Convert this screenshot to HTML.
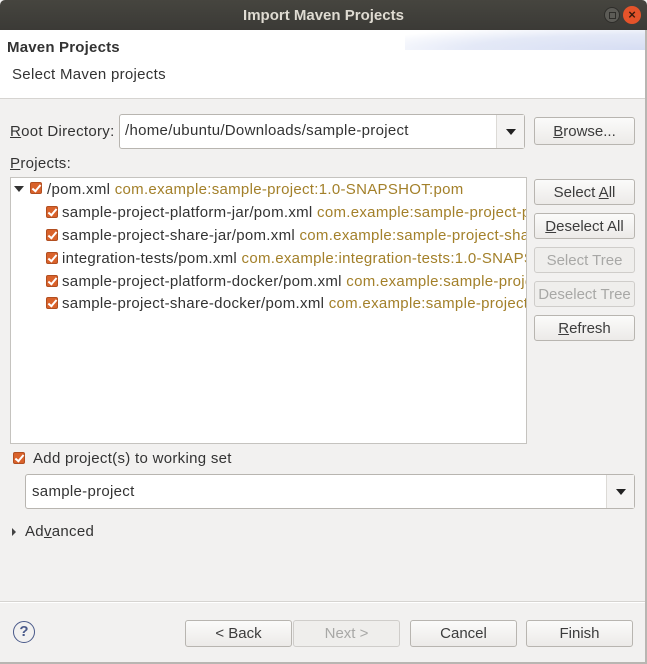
<!DOCTYPE html>
<html><head><style>
*{box-sizing:border-box;margin:0;padding:0}
body{width:647px;height:664px;overflow:hidden;background:#f2f1f0;font-family:"Liberation Sans",sans-serif;font-size:15px;letter-spacing:0.3px;color:#3c3c3c;position:relative}
.abs{position:absolute;white-space:nowrap}
.btn{position:absolute;border:1px solid #b8b5b0;border-radius:3px;background:linear-gradient(#fbfbfa,#eceae8);text-align:center;font-size:15px;color:#3c3c3c;line-height:26px;letter-spacing:0}
.dis{color:#a8a8a6;background:#efeeec;border-color:#cfcdca}
.cb{position:absolute;width:12px;height:12px;border-radius:2px;background:#d9622b;border:1px solid #b14e20}
.cb:after{content:"";position:absolute;left:3px;top:0px;width:3px;height:7px;border:solid #fff;border-width:0 2px 2px 0;transform:rotate(40deg)}
.row{position:absolute;white-space:nowrap;font-size:15px;color:#333}
.row span{color:#a3802a}
u{text-decoration:underline}
</style></head><body>
<div class="abs" style="left:0;top:0;width:647px;height:30px;background:linear-gradient(#46453f,#3b3a36);border-radius:5px 5px 0 0"></div>
<div class="abs" style="left:0;top:7px;width:647px;text-align:center;color:#dfdbd2;font-weight:bold;font-size:15px;letter-spacing:0">Import Maven Projects</div>
<div class="abs" style="left:604px;top:7px;width:16px;height:16px;border-radius:50%;background:#5c5b56;border:1px solid #2e2d2a"></div>
<div class="abs" style="left:609px;top:12px;width:7px;height:7px;border:1px solid #2e2d2a"></div>
<div class="abs" style="left:623px;top:6px;width:18px;height:18px;border-radius:50%;background:#e5532a;color:#3a1a0c;font-size:13px;text-align:center;line-height:18px;font-weight:bold;letter-spacing:0">×</div>
<div class="abs" style="left:0;top:30px;width:647px;height:69px;background:#fff;border-bottom:1px solid #d6d4d1"></div>
<div class="abs" style="left:405px;top:30px;width:242px;height:20px;background:radial-gradient(ellipse 300px 26px at 100% 100%,#d6ddf3 0%,#e4e9f7 60%,rgba(255,255,255,0) 100%)"></div>
<div class="abs" style="left:7px;top:39px;font-weight:bold;font-size:15px;color:#333;letter-spacing:0.2px">Maven Projects</div>
<div class="abs" style="left:12px;top:66px;color:#333">Select Maven projects</div>

<div class="abs" style="left:10px;top:123px;color:#333"><u>R</u>oot Directory:</div>
<div class="abs" style="left:119px;top:114px;width:406px;height:35px;border:1px solid #b8b5b0;border-radius:3px;background:#fff"></div>
<div class="abs" style="left:496px;top:115px;width:28px;height:33px;border-left:1px solid #dcdad6;background:#f4f3f2"></div>
<div class="abs" style="left:506px;top:129px;border-left:5px solid transparent;border-right:5px solid transparent;border-top:6px solid #222"></div>
<div class="abs" style="left:125px;top:122px;color:#333">/home/ubuntu/Downloads/sample-project</div>
<div class="btn" style="left:534px;top:117px;width:101px;height:28px;line-height:27px"><u>B</u>rowse...</div>

<div class="abs" style="left:10px;top:155px;color:#333"><u>P</u>rojects:</div>
<div class="abs" style="left:10px;top:177px;width:517px;height:267px;background:#fff;border:1px solid #c5c3bf;overflow:hidden">
<div class="abs" style="left:3px;top:8px;border-left:5px solid transparent;border-right:5px solid transparent;border-top:6px solid #333"></div>
<div class="cb" style="left:19px;top:4px"></div>
<div class="row" style="left:36px;top:3px">/pom.xml <span>com.example:sample-project:1.0-SNAPSHOT:pom</span></div>
<div class="cb" style="left:35px;top:28px"></div>
<div class="row" style="left:51px;top:26px">sample-project-platform-jar/pom.xml <span>com.example:sample-project-platform-jar</span></div>
<div class="cb" style="left:35px;top:51px"></div>
<div class="row" style="left:51px;top:49px">sample-project-share-jar/pom.xml <span>com.example:sample-project-share-jar</span></div>
<div class="cb" style="left:35px;top:74px"></div>
<div class="row" style="left:51px;top:72px">integration-tests/pom.xml <span>com.example:integration-tests:1.0-SNAPSHOT</span></div>
<div class="cb" style="left:35px;top:97px"></div>
<div class="row" style="left:51px;top:95px">sample-project-platform-docker/pom.xml <span>com.example:sample-project</span></div>
<div class="cb" style="left:35px;top:119px"></div>
<div class="row" style="left:51px;top:117px">sample-project-share-docker/pom.xml <span>com.example:sample-project-</span></div>
</div>
<div class="btn" style="left:534px;top:179px;width:101px;height:26px;line-height:25px">Select <u>A</u>ll</div>
<div class="btn" style="left:534px;top:213px;width:101px;height:26px;line-height:25px"><u>D</u>eselect All</div>
<div class="btn dis" style="left:534px;top:247px;width:101px;height:26px;line-height:25px">Select Tree</div>
<div class="btn dis" style="left:534px;top:281px;width:101px;height:26px;line-height:25px">Deselect Tree</div>
<div class="btn" style="left:534px;top:315px;width:101px;height:26px;line-height:25px"><u>R</u>efresh</div>

<div class="cb" style="left:13px;top:452px"></div>
<div class="abs" style="left:33px;top:450px;color:#333">Add project(s) to working set</div>
<div class="abs" style="left:25px;top:474px;width:610px;height:35px;border:1px solid #b8b5b0;border-radius:3px;background:#fff"></div>
<div class="abs" style="left:606px;top:475px;width:28px;height:33px;border-left:1px solid #dcdad6;background:#f4f3f2"></div>
<div class="abs" style="left:616px;top:489px;border-left:5px solid transparent;border-right:5px solid transparent;border-top:6px solid #222"></div>
<div class="abs" style="left:32px;top:483px;color:#333">sample-project</div>
<div class="abs" style="left:12px;top:528px;border-top:4px solid transparent;border-bottom:4px solid transparent;border-left:4px solid #444"></div>
<div class="abs" style="left:25px;top:523px;color:#333">Ad<u>v</u>anced</div>

<div class="abs" style="left:0;top:601px;width:647px;height:2px;border-top:1px solid #d6d4d1;border-bottom:1px solid #fff"></div>
<div class="abs" style="left:13px;top:621px;width:22px;height:22px;border-radius:50%;border:1.5px solid #4a5a8a;color:#4a5a8a;text-align:center;line-height:19px;font-size:15px;font-weight:bold;letter-spacing:0">?</div>
<div class="btn" style="left:185px;top:620px;width:107px;height:27px">&lt; Back</div>
<div class="btn dis" style="left:293px;top:620px;width:107px;height:27px">Next &gt;</div>
<div class="btn" style="left:410px;top:620px;width:107px;height:27px">Cancel</div>
<div class="btn" style="left:526px;top:620px;width:107px;height:27px">Finish</div>
<div class="abs" style="left:645px;top:30px;width:2px;height:634px;background:#b8b6b2"></div>
<div class="abs" style="left:0;top:662px;width:647px;height:2px;background:#b8b6b2"></div>
</body></html>
